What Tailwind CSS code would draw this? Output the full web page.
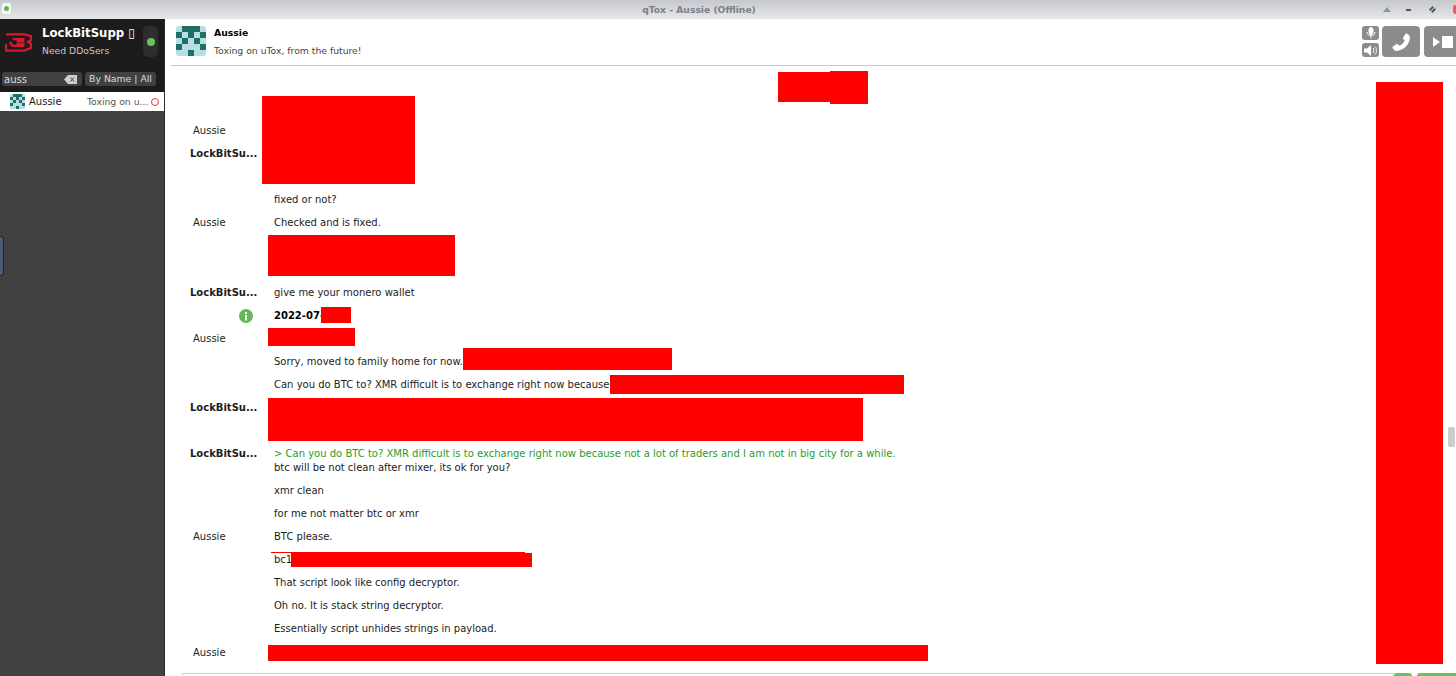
<!DOCTYPE html>
<html lang="en">
<head>
    <meta charset="UTF-8">
    <title>qTox - Aussie (Offline)</title>
    <script src="https://cdn.jsdelivr.net/npm/@tailwindcss/browser@4"></script>
</head>
<body class="h-[676px] w-[1456px] overflow-hidden bg-white font-['DejaVu_Sans',sans-serif] text-[10px] text-[#1c1c1c]">
    <svg class="hidden">
        <symbol id="identicon" viewBox="0 0 30 30">
            <rect width="30" height="30" rx="3" fill="#b5dfe3"/>
            <g fill="#1f6f64">
                <rect x="6" y="0" width="18" height="6"/>
                <rect x="12" y="6" width="6" height="6"/>
                <rect x="0" y="6" width="6" height="6"/>
                <rect x="24" y="6" width="6" height="6"/>
                <rect x="6" y="12" width="6" height="6"/>
                <rect x="18" y="12" width="6" height="6"/>
                <rect x="0" y="18" width="6" height="6"/>
                <rect x="24" y="18" width="6" height="6"/>
                <rect x="12" y="24" width="6" height="6"/>
            </g>
        </symbol>
    </svg>

    <!-- title bar -->
    <div class="relative flex h-[19px] items-center justify-center bg-gradient-to-b from-[#c6c7cc] to-[#e6e7ea] pr-[58px]">
        <span class="text-[9.2px] font-bold text-[#7d7f86]">qTox - Aussie (Offline)</span>
        <div class="absolute left-[2px] top-[3px] flex h-[11px] w-[9px] items-center justify-center rounded-[2px] bg-white/80">
            <div class="h-[5px] w-[5px] rounded-full bg-[#5fb84f]"></div>
        </div>
        <div class="absolute right-0 top-0 flex h-[19px] items-center">
            <div class="h-0 w-0 border-x-[4px] border-b-[5px] border-x-transparent border-b-[#8b93a8]"></div>
            <div class="ml-[15px] h-[2px] w-[5px] bg-[#4f5565]"></div>
            <div class="ml-[19px] h-[5px] w-[5px] rotate-45 border-x-2 border-[#4f5565]"></div>
            <div class="ml-[18px] h-[9px] w-[3px] rounded-l-full bg-[#ee5a5f]"></div>
        </div>
    </div>

    <div class="flex h-[657px]">
        <!-- sidebar -->
        <aside class="relative flex w-[165px] flex-col border-r border-[#2b2b2b] bg-[#414141]">
            <div class="h-[73px] bg-[#1c1c1c] text-white">
                <div class="flex h-[38px] items-center pt-[7px]">
                    <svg class="ml-[5px] h-[20px] w-[27px]" viewBox="0 0 28 20" fill="none" stroke="#d9182e" stroke-width="2.400">
                        <path d="M1 2H20L27 4V8L24 10L27 12V16L20 19H1V12"/>
                        <path d="M8 7H19V9H12M12 12H19V14H8L5 10"/>
                    </svg>
                    <div class="ml-[10px] w-[101px]">
                        <div class="whitespace-nowrap text-[11.7px] leading-[15px] font-bold">LockBitSupp <span class="font-normal">▯</span></div>
                        <div class="mt-[3px] text-[9.25px] leading-[13px] text-[#c8c8c8]">Need DDoSers</div>
                    </div>
                    <div class="flex h-[31px] w-[15px] items-center justify-center rounded-[5px] bg-[#2d2d2d]">
                        <div class="h-[8px] w-[8px] rounded-full bg-[#6cc25a]"></div>
                    </div>
                </div>
                <div class="mt-[15px] flex items-center px-[2px]">
                    <div class="flex h-[14px] w-[80px] items-center justify-between rounded-[3px] bg-[#414141] pl-[2px] pr-[5px] text-[#dddddd]">
                        <span>auss</span>
                        <svg class="h-[9px] w-[13px]" viewBox="0 0 13 9"><path d="M4 0H13V9H4L0 4.5Z" fill="#cfcfcf"/><path d="M6.5 2.5L10 6.5M10 2.5L6.5 6.5" stroke="#414141"/></svg>
                    </div>
                    <div class="ml-[3px] flex h-[14px] w-[71px] items-center justify-center rounded-[3px] bg-[#414141] text-[9.3px] text-[#dddddd]">By Name | All</div>
                </div>
            </div>
            <div class="flex h-[19px] items-center bg-white">
                <svg class="ml-[10px] h-[15px] w-[15px]"><use href="#identicon"/></svg>
                <span class="ml-[4px] w-[58px]">Aussie</span>
                <span class="w-[64px] whitespace-nowrap text-[9.25px] text-[#555555]">Toxing on u...</span>
                <div class="h-[8px] w-[8px] rounded-full border-[1.5px] border-[#d83a3a]"></div>
            </div>
            <div class="absolute left-0 top-[217px] h-[40px] w-[4px] rounded-r-[3px] border border-l-0 border-[#1f2430] bg-[#4a5a75]"></div>
        </aside>

        <!-- chat -->
        <main class="relative flex-1">
            <div class="relative ml-[6px] flex h-[47px] border-b border-[#c9c9c9]">
                <svg class="ml-[5px] mt-[7px] h-[30px] w-[30px]"><use href="#identicon"/></svg>
                <div class="ml-[8px]">
                    <div class="mt-[7px] text-[9.25px] leading-[13px] font-bold text-black">Aussie</div>
                    <div class="mt-[5px] text-[9.25px] leading-[13px] text-[#444444]">Toxing on uTox, from the future!</div>
                </div>
                <div class="absolute right-0 top-[7px] flex gap-[3px]">
                    <div class="flex flex-col gap-[3px]">
                        <div class="flex h-[14px] w-[17px] items-center justify-center rounded-[3px] bg-[#8c8c8c]">
                            <svg class="h-[12px] w-[10px]" viewBox="0 0 10 12" fill="none" stroke="white"><rect x="3" y="0.5" width="4" height="7" rx="2" fill="white"/><path d="M1 5C1 10 9 10 9 5M5 9V11.5"/></svg>
                        </div>
                        <div class="flex h-[14px] w-[17px] items-center justify-center rounded-[3px] bg-[#8c8c8c]">
                            <svg class="h-[11px] w-[14px]" viewBox="0 0 14 11" fill="none" stroke="white"><path d="M0 3.5H3L7 0V11L3 7.5H0Z" fill="white" stroke="none"/><path d="M9 3C10 4.5 10 6.5 9 8M11 1.5C13 4 13 7 11 9.5"/></svg>
                        </div>
                    </div>
                    <div class="flex h-[31px] w-[38px] items-center justify-center rounded-[4px] bg-[#8c8c8c]">
                        <svg class="h-[22px] w-[22px] -scale-x-100" viewBox="0 0 24 24" fill="white"><path d="M6.6 2.5L10 7.5 8 10.5C9.2 13 11 14.8 13.5 16L16.5 14 21.500 17.4C21 20 18.600 22 16 21.700 8.500 20.500 3.500 15.500 2.300 8 2 5.400 4 3 6.600 2.500Z"/></svg>
                    </div>
                    <div class="ml-[1px] flex h-[31px] w-[32px] items-center rounded-l-[4px] bg-[#8c8c8c] pl-[9px]">
                        <div class="h-0 w-0 border-y-[5px] border-l-[7px] border-y-transparent border-l-white"></div>
                        <div class="ml-[2px] h-[12px] w-[11px] rounded-[1px] bg-white"></div>
                    </div>
                </div>
            </div>

            <!-- messages -->
            <div class="relative pt-[53px] pl-[6px] leading-[14px]">
                <div class="flex h-[23px] items-center pl-[22px]">Aussie</div>
                <div class="flex h-[23px] items-center pl-[19px] font-bold">LockBitSu...</div>
                <div class="h-[23px]"></div>
                <div class="flex h-[23px] items-center pl-[103px]">fixed or not?</div>
                <div class="flex h-[23px] items-center"><span class="w-[103px] pl-[22px]">Aussie</span>Checked and is fixed.</div>
                <div class="h-[47px]"></div>
                <div class="flex h-[23px] items-center"><span class="w-[103px] pl-[19px] font-bold">LockBitSu...</span>give me your monero wallet</div>
                <div class="flex h-[23px] items-center">
                    <span class="flex w-[103px] justify-end pr-[21px]">
                        <svg class="h-[14px] w-[14px]" viewBox="0 0 14 14"><circle cx="7" cy="7" r="7" fill="#62b956"/><rect x="6" y="6" width="2" height="5.500" fill="white"/><rect x="6" y="3" width="2" height="2" fill="white"/></svg>
                    </span>
                    <span class="font-bold text-black">2022-07-</span>
                </div>
                <div class="flex h-[23px] items-center pl-[22px]">Aussie</div>
                <div class="flex h-[23px] items-center pl-[103px]">Sorry, moved to family home for now.</div>
                <div class="flex h-[23px] items-center pl-[103px]">Can you do BTC to? XMR difficult is to exchange right now because</div>
                <div class="flex h-[23px] items-center pl-[19px] font-bold">LockBitSu...</div>
                <div class="h-[23px]"></div>
                <div class="flex h-[37px] pt-[5px]">
                    <span class="w-[103px] pl-[19px] font-bold">LockBitSu...</span>
                    <div>
                        <div class="text-[#2a9a1f]">&gt; Can you do BTC to? XMR difficult is to exchange right now because not a lot of traders and I am not in big city for a while.</div>
                        <div>btc will be not clean after mixer, its ok for you?</div>
                    </div>
                </div>
                <div class="flex h-[23px] items-center pl-[103px]">xmr clean</div>
                <div class="flex h-[23px] items-center pl-[103px]">for me not matter btc or xmr</div>
                <div class="flex h-[23px] items-center"><span class="w-[103px] pl-[22px]">Aussie</span>BTC please.</div>
                <div class="flex h-[23px] items-center pl-[103px]">bc1</div>
                <div class="flex h-[23px] items-center pl-[103px]">That script look like config decryptor.</div>
                <div class="flex h-[23px] items-center pl-[103px]">Oh no. It is stack string decryptor.</div>
                <div class="flex h-[23px] items-center pl-[103px]">Essentially script unhides strings in payload.</div>
                <div class="flex h-[25px] items-center pl-[22px]">Aussie</div>
            </div>

            <!-- redaction marks painted over the screenshot -->
            <div class="absolute left-[613px] top-[53px] h-[30px] w-[52px] bg-[#ff0000]"></div>
            <div class="absolute left-[665px] top-[52px] h-[33px] w-[38px] bg-[#ff0000]"></div>
            <div class="absolute left-[97px] top-[77px] h-[88px] w-[153px] bg-[#ff0000]"></div>
            <div class="absolute left-[103px] top-[216px] h-[41px] w-[187px] bg-[#ff0000]"></div>
            <div class="absolute left-[156px] top-[288px] h-[16px] w-[30px] bg-[#ff0000]"></div>
            <div class="absolute left-[103px] top-[309px] h-[18px] w-[87px] bg-[#ff0000]"></div>
            <div class="absolute left-[298px] top-[329px] h-[22px] w-[209px] bg-[#ff0000]"></div>
            <div class="absolute left-[445px] top-[356px] h-[19px] w-[294px] bg-[#ff0000]"></div>
            <div class="absolute left-[103px] top-[379px] h-[43px] w-[595px] bg-[#ff0000]"></div>
            <div class="absolute left-[106px] top-[533px] h-[1px] w-[254px] bg-[#ff0000]"></div>
            <div class="absolute left-[126px] top-[534px] h-[14px] w-[241px] bg-[#ff0000]"></div>
            <div class="absolute left-[103px] top-[626px] h-[16px] w-[660px] bg-[#ff0000]"></div>
            <div class="absolute left-[1211px] top-[63px] h-[582px] w-[67px] bg-[#ff0000]"></div>

            <!-- scrollbar -->
            <div class="absolute left-[1283px] top-[408px] h-[20px] w-[7px] rounded-[2px] bg-[#cccccc]"></div>

            <!-- input and send buttons, cut off by the window -->
            <div class="absolute left-[17px] top-[654px] h-[3px] w-[1212px] border-t border-x border-[#cfcfcf]"></div>
            <div class="absolute left-[1229px] top-[654px] h-[3px] w-[18px] rounded-t-[3px] bg-[#6cc25a]"></div>
            <div class="absolute left-[1252px] top-[654px] h-[3px] w-[39px] rounded-tl-[3px] bg-[#6cc25a]"></div>
        </main>
    </div>
</body>
</html>
